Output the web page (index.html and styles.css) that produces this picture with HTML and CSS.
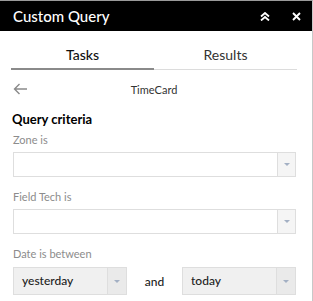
FILE: index.html
```html
<!DOCTYPE html>
<html lang="en">
<head>
    <meta charset="UTF-8">
    <title>Custom Query</title>
    <link rel="stylesheet" href="styles.css">
</head>
<body>
    <div class="panel">
        <div class="header">
            <span class="header-title">Custom Query</span>
            <span class="header-icons">
                <svg width="10" height="9" viewBox="0 0 10 9">
                    <path d="M1 4.5 L5 1 L9 4.5 M1 8.5 L5 5 L9 8.5" fill="none" stroke="#fff" stroke-width="1.8"/>
                </svg>
                <svg width="9" height="9" viewBox="0 0 9 9">
                    <path d="M1 1 L8 8 M8 1 L1 8" fill="none" stroke="#fff" stroke-width="1.9"/>
                </svg>
            </span>
        </div>

        <div class="tabs">
            <div class="tab active">Tasks</div>
            <div class="tab">Results</div>
        </div>

        <div class="nav">
            <svg class="back" width="15" height="12" viewBox="0 0 15 12">
                <path d="M14 6 H1.5 M6.5 1 L1.5 6 L6.5 11" fill="none" stroke="#8a8a8a" stroke-width="1.4"/>
            </svg>
            <span class="nav-title">TimeCard</span>
            <span></span>
        </div>

        <div class="criteria">
            <h2>Query criteria</h2>

            <div class="field">
                <label>Zone is</label>
                <div class="select">
                    <span class="select-value"></span>
                    <span class="select-arrow"></span>
                </div>
            </div>

            <div class="field">
                <label>Field Tech is</label>
                <div class="select">
                    <span class="select-value"></span>
                    <span class="select-arrow"></span>
                </div>
            </div>

            <div class="field">
                <label>Date is between</label>
                <div class="date-row">
                    <div class="select filled">
                        <span class="select-value">yesterday</span>
                        <span class="select-arrow"></span>
                    </div>
                    <span class="and">and</span>
                    <div class="select filled">
                        <span class="select-value">today</span>
                        <span class="select-arrow"></span>
                    </div>
                </div>
            </div>
        </div>
    </div>
</body>
</html>
```

FILE: styles.css
```css
body {
    margin: 0;
    font-family: 'Lato', 'Open Sans', sans-serif;
    background-color: #fff;
}
.panel {
    width: 312px;
    height: 300px;
    border-top: 1px solid #9a9a9a;
    border-right: 1px solid #c8c8c8;
    overflow: hidden;
}
.header {
    height: 30px;
    background-color: #000;
    color: #fff;
    display: flex;
    align-items: center;
    justify-content: space-between;
    padding: 0 11px 0 13px;
}
.header-title {
    font-size: 15px;
    font-weight: 500;
}
.header-icons {
    display: flex;
    align-items: center;
    gap: 22px;
}
.header-icons svg {
    display: block;
}
.tabs {
    display: flex;
    margin: 0 15px 0 11px;
    border-bottom: 1px solid #dcdcdc;
}
.tab {
    flex: 1;
    text-align: center;
    font-size: 14px;
    line-height: 20px;
    padding: 14px 0 3px;
    color: #333;
}
.tab.active {
    color: #111;
    font-weight: 500;
    border-bottom: 2px solid #8a8a8a;
    margin-bottom: -1px;
}
.nav {
    display: grid;
    grid-template-columns: 30px 1fr 30px;
    align-items: center;
    height: 38px;
    margin: 0 15px 0 11px;
}
.back {
    display: block;
    margin-left: 2px;
}
.nav-title {
    text-align: center;
    font-size: 11px;
    color: #333;
}
.criteria {
    padding: 0 16px 0 13px;
}
.criteria h2 {
    margin: 3px 0 0 -1px;
    font-size: 13px;
    font-weight: 700;
    line-height: 16px;
    color: #000;
}
.field label {
    display: block;
    font-size: 11px;
    color: #8c8c8c;
    line-height: 16px;
    margin-top: 5px;
}
.field + .field label {
    margin-top: 12px;
}
.select {
    display: flex;
    height: 23px;
    border: 1px solid #dedede;
    background-color: #fff;
    margin-top: 4px;
}
.select-value {
    flex: 1;
    padding-left: 8px;
    font-size: 12px;
    font-weight: 500;
    line-height: 26px;
    color: #222;
}
.select-arrow {
    width: 17px;
    border-left: 1px solid #dedede;
    background-color: #f5f5f5;
    display: flex;
    align-items: center;
    justify-content: center;
}
.select-arrow::after {
    content: "";
    border-left: 3px solid transparent;
    border-right: 3px solid transparent;
    border-top: 3px solid #a3b0c4;
}
.date-row {
    display: flex;
    align-items: center;
    margin-top: 5px;
}
.date-row .select {
    width: 112px;
    margin-top: 0;
    height: 26px;
    background-color: #f0f0f0;
}
.date-row .select-arrow {
    width: 18px;
    background-color: #eaeaea;
}
.and {
    flex: 1;
    text-align: center;
    font-size: 12px;
    font-weight: 500;
    color: #222;
}
```
